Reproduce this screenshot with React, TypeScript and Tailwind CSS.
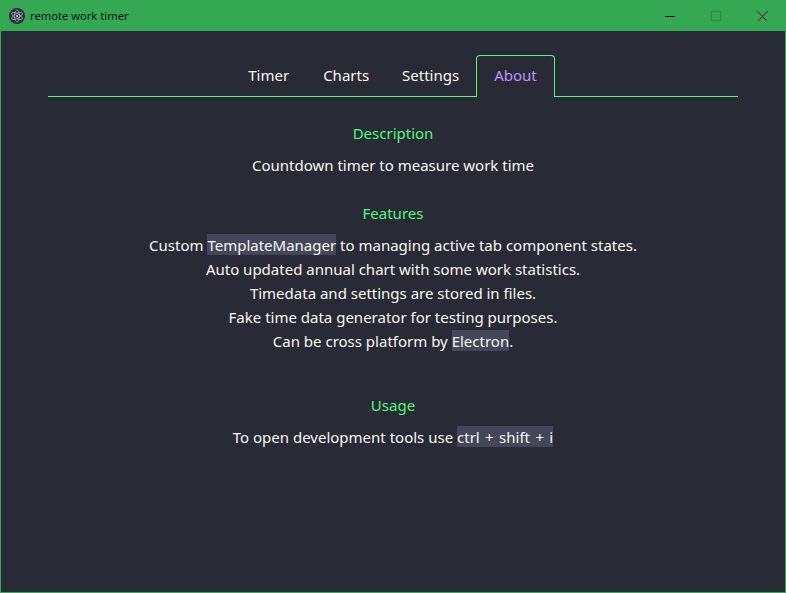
const tabs = ['Timer', 'Charts', 'Settings', 'About'];
const active = 'About';

function Code({ children, wide }: { children: string; wide?: boolean }) {
  return <span className={wide ? 'bg-[#44475a] pt-px [word-spacing:1.5px]' : 'bg-[#44475a] pt-px'}>{children}</span>;
}

function Heading({ children }: { children: string }) {
  return <h2 className="leading-6 text-[#50fa7b]">{children}</h2>;
}

function AtomLogo() {
  return (
    <svg width="16" height="16" viewBox="0 0 16 16" fill="none" className="shrink-0">
      <circle cx="8" cy="8" r="8" fill="#2b2e3b" />
      <g stroke="#9aa7b5" strokeWidth="0.8">
        <ellipse cx="8" cy="8" rx="6" ry="2.4" transform="rotate(30 8 8)" />
        <ellipse cx="8" cy="8" rx="6" ry="2.4" transform="rotate(90 8 8)" />
        <ellipse cx="8" cy="8" rx="6" ry="2.4" transform="rotate(150 8 8)" />
      </g>
      <circle cx="8" cy="8" r="1.1" fill="#c5d0da" />
    </svg>
  );
}

export default function App() {
  return (
    <div className="flex h-[593px] w-[786px] flex-col overflow-hidden border border-[#34a853] bg-[#282a36] font-['Noto_Sans',sans-serif] text-[15px] text-[#f8f8f2]">
      {/* Title bar */}
      <header className="flex h-[30px] shrink-0 items-center justify-between bg-[#34a853]">
        <div className="flex items-center gap-[5px] pl-2 text-[11.2px] text-[#10151a]">
          <AtomLogo />
          <span>remote work timer</span>
        </div>
        <div className="flex">
          <button className="flex h-[30px] w-[46px] items-center justify-center">
            <svg width="10" height="10" viewBox="0 0 10 10" shapeRendering="crispEdges">
              <path d="M0 5.5H10" stroke="#000" />
            </svg>
          </button>
          <button className="flex h-[30px] w-[46px] items-center justify-center">
            <svg width="10" height="10" viewBox="0 0 10 10" shapeRendering="crispEdges">
              <rect x="0.5" y="0.5" width="9" height="9" fill="none" stroke="#2a8a44" />
            </svg>
          </button>
          <button className="flex h-[30px] w-[46px] items-center justify-center">
            <svg width="11" height="11" viewBox="0 0 11 11" shapeRendering="crispEdges">
              <path d="M0.5 0.5L10.5 10.5M10.5 0.5L0.5 10.5" stroke="#000" />
            </svg>
          </button>
        </div>
      </header>

      {/* Tabs */}
      <nav className="mx-[47px] mt-6 flex h-[42px] shrink-0 justify-center border-b border-[#50fa7b]">
        {tabs.map((tab) =>
          tab === active ? (
            <button
              key={tab}
              className="-mb-px h-[42px] rounded-t border border-b-0 border-[#50fa7b] bg-[#282a36] px-[17px] pb-0.5 text-[#bd93f9]"
            >
              {tab}
            </button>
          ) : (
            <button key={tab} className={tab === 'Charts' ? 'pl-[17px] pr-4' : 'px-[17px]'}>
              {tab}
            </button>
          ),
        )}
      </nav>

      {/* About */}
      <main className="pt-6 text-center leading-6">
        <section>
          <Heading>Description</Heading>
          <p className="mt-2">Countdown timer to measure work time</p>
        </section>
        <section className="mt-6">
          <Heading>Features</Heading>
          <div className="mt-2">
            <p>
              Custom <Code>TemplateManager</Code> to managing active tab component states.
            </p>
            <p>Auto updated annual chart with some work statistics.</p>
            <p>Timedata and settings are stored in files.</p>
            <p>Fake time data generator for testing purposes.</p>
            <p>
              Can be cross platform by <Code>Electron</Code>.
            </p>
          </div>
        </section>
        <section className="mt-10">
          <Heading>Usage</Heading>
          <p className="mt-2">
            To open development tools use <Code wide>ctrl + shift + i</Code>
          </p>
        </section>
      </main>
    </div>
  );
}
